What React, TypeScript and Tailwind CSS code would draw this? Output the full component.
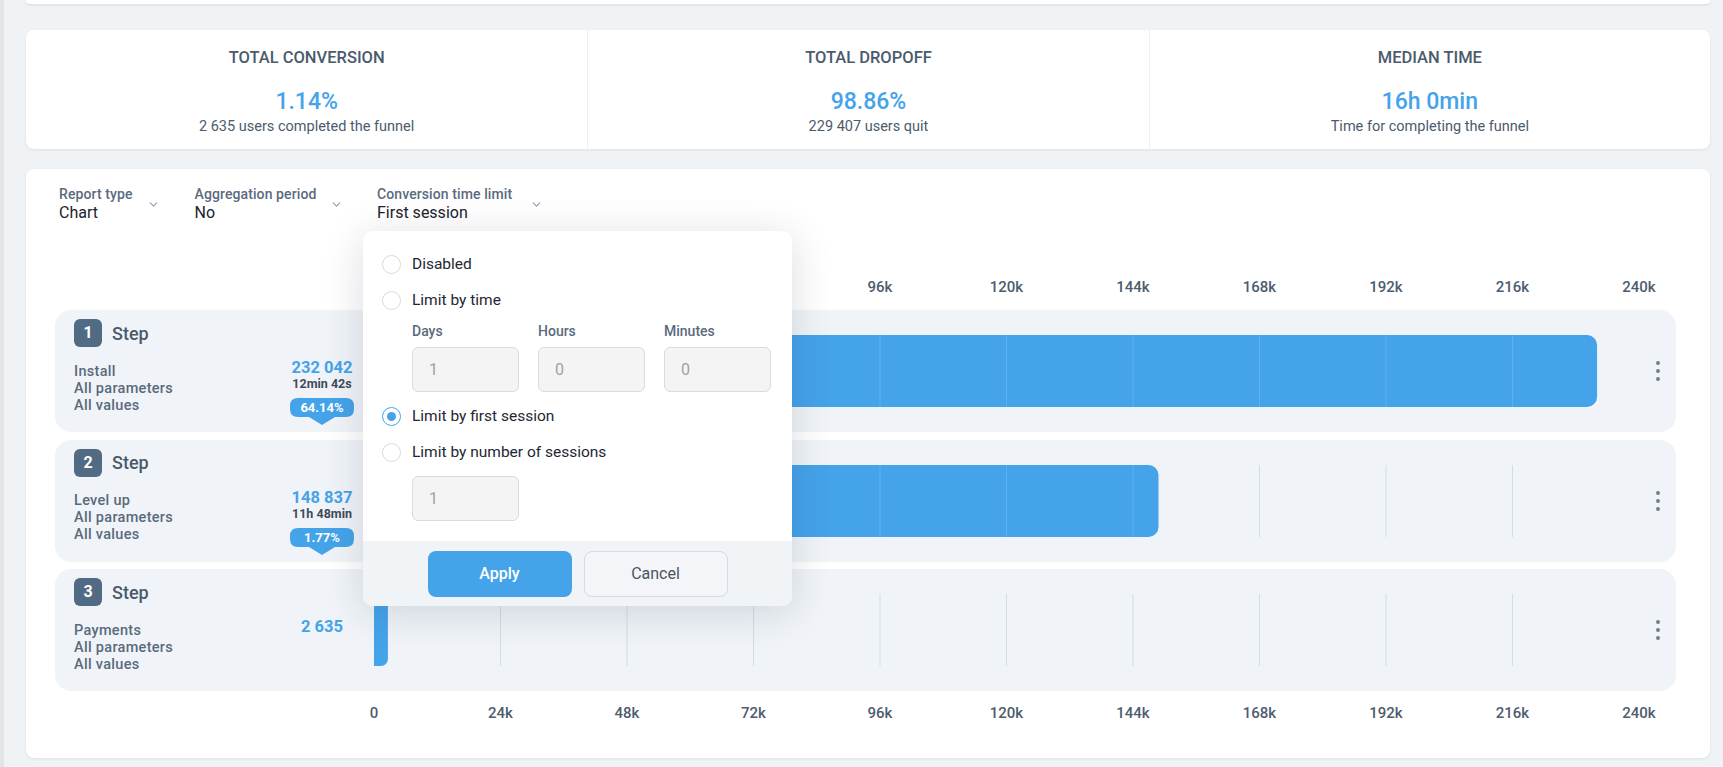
import { ChevronDown } from 'lucide-react'

// Funnel report: summary stats, filters, step chart and the open "Conversion time limit" dropdown

const ticks = ['0', '24k', '48k', '72k', '96k', '120k', '144k', '168k', '192k', '216k', '240k']
const MAX = 240000
const CHART_W = 1265
const BAR_H = 72

interface Step {
  n: number
  name: string
  count: string
  value: number
  time?: string
  pct?: string
}

const steps: Step[] = [
  { n: 1, name: 'Install', count: '232 042', value: 232042, time: '12min 42s', pct: '64.14%' },
  { n: 2, name: 'Level up', count: '148 837', value: 148837, time: '11h 48min', pct: '1.77%' },
  { n: 3, name: 'Payments', count: '2 635', value: 2635 },
]

const stats = [
  { title: 'TOTAL CONVERSION', value: '1.14%', sub: '2 635 users completed the funnel' },
  { title: 'TOTAL DROPOFF', value: '98.86%', sub: '229 407 users quit' },
  { title: 'MEDIAN TIME', value: '16h 0min', sub: 'Time for completing the funnel' },
]

function Bar({ value }: { value: number }) {
  const w = (value / MAX) * CHART_W
  const r = Math.min(10, w / 2)
  const d = `M0 0 H${w - r} A${r} ${r} 0 0 1 ${w} ${r} V${BAR_H - r} A${r} ${r} 0 0 1 ${w - r} ${BAR_H} H0 Z`
  const lines = [1, 2, 3, 4, 5, 6, 7, 8, 9].map(i => i * (CHART_W / 10))
  return (
    <svg width={CHART_W} height={BAR_H} className="block shrink-0">
      {lines.map(x => (
        <line key={x} x1={x} x2={x} y1={0} y2={BAR_H} stroke="#d3dce6" strokeWidth="1" />
      ))}
      <path d={d} fill="#45a3ea" />
      {lines.filter(x => x < w - 1).map(x => (
        <line key={'o' + x} x1={x} x2={x} y1={0} y2={BAR_H} stroke="#ffffff" strokeOpacity="0.14" strokeWidth="1" />
      ))}
    </svg>
  )
}

function PctBadge({ pct }: { pct: string }) {
  return (
    <div className="relative w-[64px] h-[27px] mt-[7px]">
      <svg width="64" height="27" className="absolute inset-0">
        <path d="M8 0 H56 Q64 0 64 8 V11 Q64 19 56 19 H45 L32 27 L19 19 H8 Q0 19 0 11 V8 Q0 0 8 0 Z" fill="#45a3ea" />
      </svg>
      <span className="relative block h-[19px] leading-[19px] text-center text-[13px] font-bold text-white">{pct}</span>
    </div>
  )
}

function Kebab() {
  return (
    <div className="flex-1 flex flex-col items-center justify-center gap-[4px]">
      <span className="w-[4px] h-[4px] rounded-full bg-[#6f7f91]" />
      <span className="w-[4px] h-[4px] rounded-full bg-[#6f7f91]" />
      <span className="w-[4px] h-[4px] rounded-full bg-[#6f7f91]" />
    </div>
  )
}

function StepRow({ s }: { s: Step }) {
  return (
    <div className="h-[122px] rounded-[16px] bg-[#f0f4f8] flex pl-[19px]">
      <div className="w-[300px] shrink-0 pt-[9px]">
        <div className="flex items-center">
          <div className="w-[28px] h-[28px] rounded-[6px] bg-[#516b85] text-white text-[16px] font-bold flex items-center justify-center">
            {s.n}
          </div>
          <span className="ml-[10px] text-[18px] font-medium text-[#4a5a6d]">Step</span>
        </div>
        <div className="flex items-start mt-[12px]">
          <div className="flex-1 pt-[3.5px] text-[14.5px] leading-[17px] font-medium text-[#5a6a7c] tracking-[0.3px]">
            <div>{s.name}</div>
            <div>All parameters</div>
            <div>All values</div>
          </div>
          <div className="w-[72px] mr-[16px] flex flex-col items-center">
            <div className="text-[16.5px] leading-[18px] font-bold text-[#45a3ea]">{s.count}</div>
            {s.time && <div className="text-[12.5px] leading-[14px] font-bold text-[#3f4b59]">{s.time}</div>}
            {s.pct && <PctBadge pct={s.pct} />}
          </div>
        </div>
      </div>
      <div className="flex items-center">
        <Bar value={s.value} />
      </div>
      <Kebab />
    </div>
  )
}

function Axis({ className = '' }: { className?: string }) {
  return (
    <div className={`flex ml-[255.75px] ${className}`}>
      {ticks.map(t => (
        <div key={t} className="w-[126.5px] shrink-0 text-center text-[15px] leading-[18px] font-medium text-[#4d5c6e]">{t}</div>
      ))}
    </div>
  )
}

function Filter({ label, value, textW, mr }: { label: string; value: string; textW: string; mr: string }) {
  return (
    <div className={`flex items-center ${mr}`}>
      <div className={textW}>
        <div className="text-[14px] leading-[17px] font-medium text-[#5a6b7e] tracking-[0.1px]">{label}</div>
        <div className="text-[16px] leading-[20px] text-[#1b222d]">{value}</div>
      </div>
      <ChevronDown size={13} strokeWidth={2} className="text-[#8aa2bb]" />
    </div>
  )
}

function Radio({ checked, label }: { checked?: boolean; label: string }) {
  return (
    <div className="flex items-center h-[20px]">
      <span className={`w-[19px] h-[19px] rounded-full border flex items-center justify-center bg-white ${checked ? 'border-[#45a3ea] border-[1.5px]' : 'border-[#d2dbe4]'}`}>
        {checked && <span className="w-[9px] h-[9px] rounded-full bg-[#45a3ea]" />}
      </span>
      <span className="ml-[11px] text-[15.5px] leading-[20px] text-[#1e2733]">{label}</span>
    </div>
  )
}

function NumInput({ value }: { value: string }) {
  return (
    <div className="w-[107px] h-[45px] rounded-[6px] border border-[#d3dde6] bg-[#f4f4f4] pl-[16px] flex items-center text-[16px] text-[#9aa3ad]">
      {value}
    </div>
  )
}

function TimeLimitMenu() {
  return (
    <div className="absolute left-[337px] top-[62px] w-[429px] rounded-[10px] bg-white shadow-[0_6px_40px_rgba(30,40,60,0.16)] overflow-hidden">
      <div className="pl-[19px] pt-[23px] pb-[20px]">
        <Radio label="Disabled" />
        <div className="mt-[16px]"><Radio label="Limit by time" /></div>
        <div className="ml-[30px] mt-[13px] flex gap-[19px]">
          {[['Days', '1'], ['Hours', '0'], ['Minutes', '0']].map(([l, v]) => (
            <div key={l}>
              <div className="text-[14px] leading-[17px] font-medium text-[#5a6b7e]">{l}</div>
              <div className="mt-[7px]"><NumInput value={v} /></div>
            </div>
          ))}
        </div>
        <div className="mt-[14px]"><Radio checked label="Limit by first session" /></div>
        <div className="mt-[16px]"><Radio label="Limit by number of sessions" /></div>
        <div className="ml-[30px] mt-[14px]"><NumInput value="1" /></div>
      </div>
      <div className="h-[65px] bg-[#f1f4f7] flex items-center justify-center gap-[12px]">
        <button className="w-[144px] h-[46px] rounded-[8px] bg-[#45a3ea] text-white text-[16px] font-medium">Apply</button>
        <button className="w-[144px] h-[46px] rounded-[8px] border border-[#d3dbe3] bg-[#f3f5f8] text-[#4a5563] text-[16px]">Cancel</button>
      </div>
    </div>
  )
}

export default function App() {
  return (
    <div className="h-[767px] w-full overflow-hidden bg-[#f0f3f6] flex font-['Roboto',sans-serif]">
      <div className="w-[4px] shrink-0 bg-[#e3e4e6]" />
      <div className="flex-1 min-w-0 pl-[22px] pr-[13px]">
        <div className="h-[4px] bg-white rounded-b-[8px] shadow-[0_1px_3px_rgba(0,0,0,0.1)]" />

        <div className="mt-[26px] h-[119px] rounded-[8px] bg-white shadow-[0_1px_3px_rgba(0,0,0,0.08)] grid grid-cols-3">
          {stats.map((s, i) => (
            <div key={s.title} className={`flex flex-col items-center pt-[17px] ${i > 0 ? 'border-l border-[#eef1f4]' : ''}`}>
              <div className="text-[16.5px] leading-[22px] font-medium text-[#4b5b6d]">{s.title}</div>
              <div className="mt-[19px] text-[23px] leading-[28px] font-medium text-[#45a3ea]">{s.value}</div>
              <div className="mt-[2px] text-[14.5px] leading-[18px] text-[#4b5b6d]">{s.sub}</div>
            </div>
          ))}
        </div>

        <div className="relative mt-[20px] h-[589px] rounded-[8px] bg-white shadow-[0_1px_3px_rgba(0,0,0,0.08)]">
          <div className="flex pl-[33px] pt-[17px]">
            <Filter label="Report type" value="Chart" textW="w-[87.5px]" mr="mr-[35px]" />
            <Filter label="Aggregation period" value="No" textW="w-[135px]" mr="mr-[34.5px]" />
            <Filter label="Conversion time limit" value="First session" textW="w-[153px]" mr="" />
          </div>

          <div className="pl-[29px] pr-[34px]">
            <Axis className="mt-[55px]" />
            <div className="mt-[14px] flex flex-col gap-[7.5px]">
              {steps.map(s => <StepRow key={s.n} s={s} />)}
            </div>
            <Axis className="mt-[13px]" />
          </div>

          <TimeLimitMenu />
        </div>
      </div>
    </div>
  )
}
